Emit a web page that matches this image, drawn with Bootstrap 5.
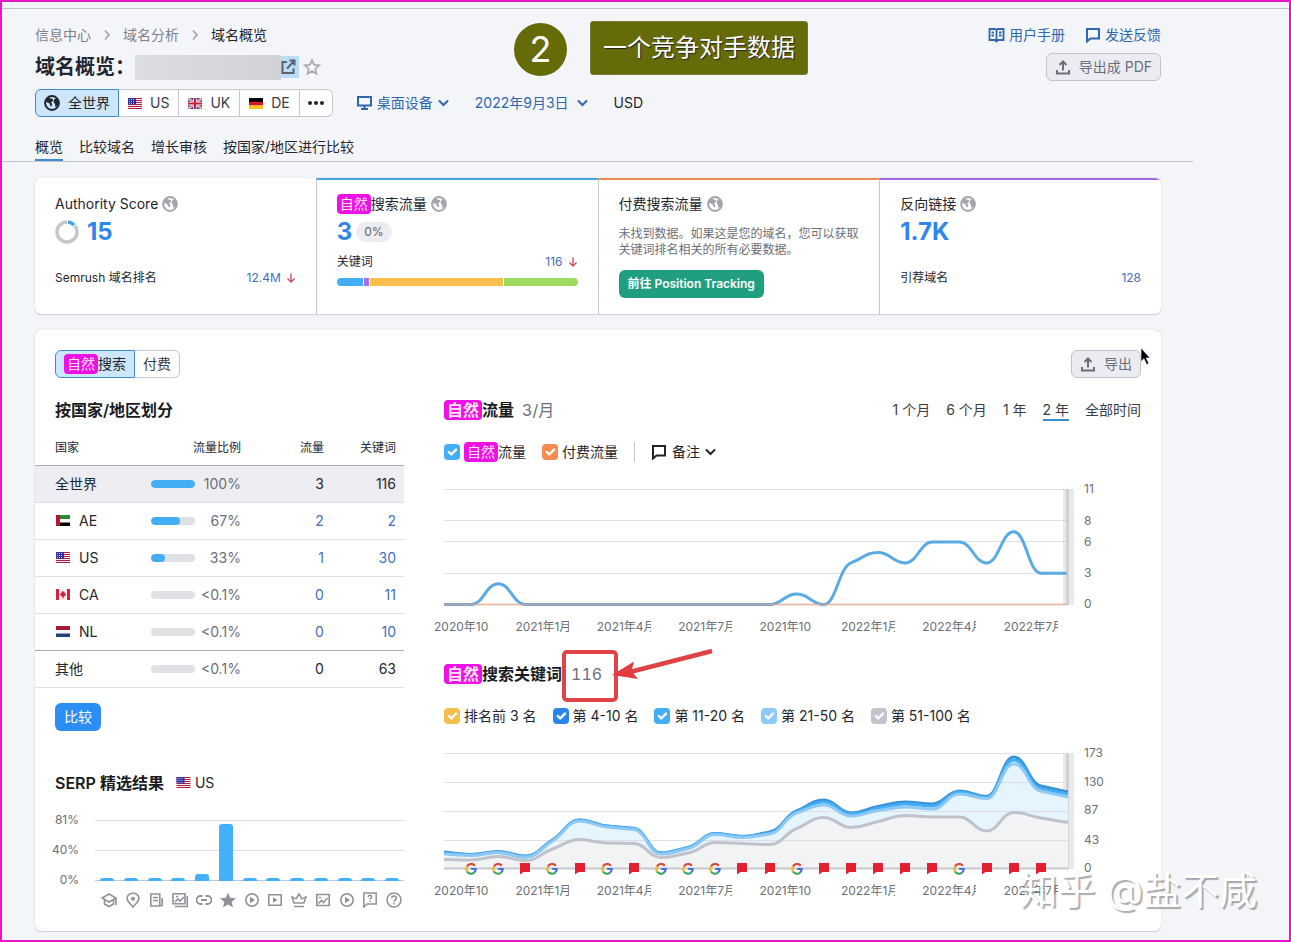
<!DOCTYPE html>
<html lang="zh-CN">
<head>
<meta charset="utf-8">
<meta name="viewport" content="width=device-width, initial-scale=1">
<title>域名概览</title>
<link href="https://cdn.jsdelivr.net/npm/bootstrap@5.3.0/dist/css/bootstrap.min.css" rel="stylesheet">
<style>
  body { font-family: Inter, "Noto Sans CJK SC", sans-serif; font-size: 14px; line-height: 20px; color: #24262f; background: #f4f5f9; }
  .page { min-height: 100vh; border: 2px solid #e516c4; padding-bottom: 8px; }
  .topline { height: 7px; border-bottom: 1px solid #bfc3d3; }
  .inner { padding-left: 33px; padding-right: 128px; }
  a { color: #2f66b0; text-decoration: none; }
  svg { flex: none; }
  .fs12 { font-size: 12px; line-height: 16px; }
  .dim { color: #6c6e79; }
  .blue { color: #3f6fc0; }
  .head { padding-top: 16px; }
  .crumb { gap: 12px; color: #7f818c; }
  .crumb a { color: inherit; }
  .help-links { gap: 20px; }
  .site-title { font-size: 20px; line-height: 28px; font-weight: 700; }
  .masked { width: 146px; height: 25px; background: linear-gradient(90deg, #dcdde1, #d0d2d7); }
  .ext { background: #b9dcf8; padding: 3px 3px 3px 0; color: #5b6275; display: flex; }
  .tool { height: 28px; display: inline-flex; align-items: center; font-size: 14px; line-height: 20px; border-radius: 6px; padding: 0 8px; border: 1px solid transparent; white-space: nowrap; }
  .tool-gray, .tool-gray:hover { background: #ebecf1; border-color: #c0c2cc; color: #6c6e79; gap: 8px; }
  .seg .tool { background: #fff; border-color: #c4c7cf; color: #3a3c46; gap: 8px; }
  .seg .tool.land { padding: 0 9px; }
  .seg .tool.active { background: #cbe6fd; border-color: #3e8bcb; color: #24262f; z-index: 1; }
  .filters { gap: 26px; }
  .drop, .drop:hover { border: 0; background: none; padding: 0; color: #2f66b0; display: inline-flex; align-items: center; gap: 5px; }
  .tabs-line { gap: 16px; padding: 20px 0 0 33px; margin-right: 96px; border-bottom: 1px solid #c0c3cf; }
  .tabs-line a { color: #24262f; padding-bottom: 2px; border-bottom: 2px solid transparent; }
  .tabs-line a.active { border-color: #3a8bd0; }
  .sheet { background: #fff; border-radius: 6px; box-shadow: 0 0 1px #a9abb6, 0 1px 1px #d2d4db; overflow: hidden; }
  .metric { min-height: 136px; padding: 14px 20px 16px; border-top: 2px solid #fff; }
  .metric + .metric { border-left: 1px solid #c4c6ce; }
  .metric.top-blue { border-top-color: #45a7e6; }
  .metric.top-orange { border-top-color: #ee8a55; }
  .metric.top-purple { border-top-color: #a06be0; }
  .value { font-size: 24px; line-height: 28px; font-weight: 700; color: #2f86ea; margin-top: 4px; gap: 8px; }
  .pct { background: #ececf1; border-radius: 10px; padding: 2px 8px; color: #5f616c; font-weight: 400; }
  .trend { display: inline-flex; align-items: center; gap: 5px; }
  .hl { background: #ef10e4; color: #ffe3fd; border-radius: 4px; padding: 0 3px; display: inline-block; }
  .gap-row { margin-top: 24px; }
  .desc { margin: 12px 0; }
  .tool-green, .tool-green:hover { background: #1f9f80; color: #fff; font-size: 12px; font-weight: 600; }
  .tool-blue, .tool-blue:hover { background: #2b8ef5; color: #fff; }
  .shares { height: 8px; gap: 1px; margin-top: 8px; border-radius: 4px; overflow: hidden; }
  .panel-top { padding: 20px 20px 0; }
  .split { display: grid; grid-template-columns: minmax(0, 369fr) minmax(0, 757fr); margin-top: 22px; }
  .indent { padding-left: 20px; }
  .right-col { padding: 0 20px 32px 40px; }
  h2 { font-size: 16px; line-height: 20px; font-weight: 600; margin: 0; color: #191b23; white-space: nowrap; }
  h2 .count { font-weight: 400; color: #6c6e79; font-variant-numeric: tabular-nums; }
  .geo { table-layout: fixed; width: 100%; margin: 12px 0 15px; }
  .geo th { font-size: 12px; font-weight: 400; height: 33px; padding: 0; border-bottom: 1px solid #a9abb6; }
  .geo td { height: 37px; padding: 0; border-bottom: 1px solid #dfe0e5; }
  .geo .sel td { background: #ededf2; }
  .geo .dark td { border-bottom-color: #a9abb6; }
  .geo th:first-child, .geo td:first-child { padding-left: 20px; }
  .geo th:last-child, .geo td:last-child { padding-right: 8px; }
  .geo .progress { width: 44px; height: 8px; border-radius: 4px; background: #dfe1e5; }
  .geo .progress-bar { background: #43aef5; border-radius: 4px; }
  .serp-title { margin-top: 42px; gap: 12px; }
  .serp { margin-top: 19px; padding-left: 20px; gap: 16px; }
  .serp-scale { width: 24px; height: 76px; }
  .serp-plot { height: 61px; margin-top: 8px; background: linear-gradient(#dcdee3, #dcdee3) 0 0/100% 1px no-repeat, linear-gradient(#dcdee3, #dcdee3) 0 30px/100% 1px no-repeat, linear-gradient(#c4c7cf, #c4c7cf) 0 60px/100% 1px no-repeat; }
  .thirteen { display: grid; grid-template-columns: repeat(13, minmax(0, 1fr)); align-items: end; }
  .serp-bar { width: 14px; margin-left: 5px; background: #43b0fc; border-radius: 3px 3px 0 0; }
  .serp-icons { margin-top: 11px; color: #8f9298; }
  .serp-icons svg { margin-left: 6px; }
  .periods { gap: 16px; }
  .periods button { border: 0; background: none; padding: 0; color: #3a3c46; height: 20px; white-space: nowrap; }
  .periods .active { box-shadow: 0 1px 0 #3a8bd0; border-bottom: 1px solid #3a8bd0; }
  .legend { margin-top: 22px; height: 20px; gap: 16px; white-space: nowrap; }
  .legend label { display: inline-flex; align-items: center; gap: 4px; }
  .legend .form-check-input { width: 16px; height: 16px; margin: 0; border: 0; border-radius: 4px; float: none; }
  .c1:checked { background-color: #43aef5; } .c2:checked { background-color: #fb8a50; }
  .c3:checked { background-color: #f5bd4a; } .c4:checked { background-color: #2a86ea; }
  .c5:checked { background-color: #8ecaf9; } .c6:checked { background-color: #c2c3cc; }
  .vr-line { width: 1px; height: 20px; background: #c4c6ce; }
  .chart { margin-top: 27px; }
  .plot { height: 116px; width: 100%; overflow: visible; display: block; }
  .axis { width: 73px; height: 116px; overflow: visible; font-size: 12px; }
  .axis text { fill: #6c6e79; }
  .dates { margin: 14px 56px 0 -10px; color: #6c6e79; }
  .dates span { flex: 1 1 0; }
  .dates i { display: block; width: 54px; overflow: hidden; white-space: nowrap; font-style: normal; }
  .second { margin-top: 29px; }
  .markers { position: absolute; left: 0; right: 0; bottom: -6px; padding: 0 2.17%; display: grid; grid-template-columns: repeat(22, minmax(0, 1fr)); justify-items: center; }
  .boxed { position: relative; margin-left: 9px; }
  .red-frame { position: absolute; left: -9px; top: -14px; width: 56px; height: 52px; border: 4px solid #df4547; border-radius: 5px; }
  .red-arrow { position: absolute; left: 41px; top: -16px; }
  .note-circle { position: absolute; left: 512px; top: 21px; width: 53px; height: 53px; border-radius: 50%; background: #666b0a; color: #fff; font: 36px/53px Inter, sans-serif; text-align: center; }
  .note-box { position: absolute; left: 588px; top: 19px; height: 54px; padding: 0 12px; border-radius: 3px; background: #666b0a; border: 1px solid #77793c; color: #fff; font-size: 24px; line-height: 52px; text-shadow: 1px 1px 1px #222; white-space: nowrap; }
  .pointer { position: absolute; right: -10px; top: -3px; }
  .watermark { position: absolute; right: 32px; bottom: 24px; font-size: 38px; line-height: 52px; color: #fff; text-shadow: 2px 2px 1px rgba(90, 90, 95, .5); white-space: nowrap; }
</style>
</head>
<body>
<svg width="0" height="0" class="position-absolute" aria-hidden="true">
  <symbol id="globe" viewBox="0 0 16 16"><circle cx="8" cy="8" r="6.900" fill="none" stroke="currentColor" stroke-width="2"/><path fill="currentColor" d="M2.500 3.500 5 2l1 1.500 2.500.3.800 1.500L7.800 7l-1 .2 1.400 1.500-.6 2.800-1.300-.8-.5-1.900-2-1.300L2 7zM10 4.500 12.500 3l2 3-.3 4-2 1.800-1.200-.6.2-2.200L9.600 7.500z"/></symbol>
  <symbol id="chev" viewBox="0 0 11 8"><path d="m1.500 2 4 4 4-4" fill="none" stroke="currentColor" stroke-width="2" stroke-linecap="round"/></symbol>
  <symbol id="crumbchev" viewBox="0 0 8 12"><path d="m2 1.500 4 4.500-4 4.500" fill="none" stroke="#9c9ea8" stroke-width="1.600"/></symbol>
  <symbol id="upload" viewBox="0 0 16 16"><path d="M2 11v3.500h12V11M8 11.500V3M4.500 6 8 2.500 11.500 6" fill="none" stroke="currentColor" stroke-width="2"/></symbol>
  <symbol id="speech" viewBox="0 0 16 16"><path d="M2 2h12v9.500H5.500L2 14.500z" fill="none" stroke="currentColor" stroke-width="2"/></symbol>
  <symbol id="down" viewBox="0 0 10 10"><path d="M5 .5v8M1.500 5.500 5 9l3.500-3.500" fill="none" stroke="#c9485b" stroke-width="1.300"/></symbol>
  <symbol id="f-us" viewBox="0 0 14 11"><path fill="#f5e9ee" d="M0 0h14v11H0z"/><path d="M0 .5h14M0 2.500h14M0 4.500h14M0 6.500h14M0 8.500h14M0 10.500h14" stroke="#b0203c"/><path fill="#3230a0" d="M0 0h8v6.500H0z"/><path d="M1 1.500h6M1 3.500h6M1 5.500h6" stroke="#b9b9ea" stroke-dasharray="1 1"/></symbol>
  <symbol id="f-uk" viewBox="0 0 14 11"><path fill="#2b3a86" d="M0 0h14v11H0z"/><path d="m0 0 14 11M14 0 0 11" stroke="#fff" stroke-width="2.200"/><path d="m0 0 14 11M14 0 0 11" stroke="#c8203a" stroke-width=".8"/><path d="M7 0v11M0 5.500h14" stroke="#fff" stroke-width="3.600"/><path d="M7 0v11M0 5.500h14" stroke="#c8203a" stroke-width="2.200"/></symbol>
  <symbol id="f-de" viewBox="0 0 14 11"><path d="M0 0h14v4H0z"/><path fill="#d9151c" d="M0 4h14v3.500H0z"/><path fill="#f7c51e" d="M0 7.500h14V11H0z"/></symbol>
  <symbol id="f-ae" viewBox="0 0 14 11"><path fill="#2d8a35" d="M0 0h14v4H0z"/><path fill="#f4f4f4" d="M0 4h14v3.500H0z"/><path d="M0 7.500h14V11H0z"/><path fill="#b8162c" d="M0 0h4v11H0z"/></symbol>
  <symbol id="f-ca" viewBox="0 0 14 11"><path fill="#f8eef0" d="M0 0h14v11H0z"/><path fill="#d3203c" d="M0 0h3v11H0zM11 0h3v11h-3zM7 1.500l.8 1.600.9-.4-.2 2 1.500-.6-.3 1.200.4.4-2.100 1.900.1.700H7.300V10h-.6V8.300H5.900l.1-.7L3.900 5.700l.4-.4L4 4.100l1.500.6-.2-2 .9.4z"/></symbol>
  <symbol id="f-nl" viewBox="0 0 14 11"><path fill="#a01c34" d="M0 0h14v4H0z"/><path fill="#f6f6f8" d="M0 4h14v3.500H0z"/><path fill="#26407c" d="M0 7.500h14V11H0z"/></symbol>
  <symbol id="goog" viewBox="0 0 12 12"><g fill="none" stroke-width="2.200"><path d="M9.800 2.700A4.700 4.700 0 0 0 2 3.500" stroke="#dd4437"/><path d="M2 3.500a4.700 4.700 0 0 0 0 5" stroke="#f2b51d"/><path d="M2 8.500a4.700 4.700 0 0 0 7.200 1" stroke="#36a455"/><path d="M9.200 9.500A4.700 4.700 0 0 0 10.700 6H6.200" stroke="#4273d8"/></g></symbol>
  <symbol id="flag" viewBox="0 0 12 12"><path fill="#e3202f" d="M1 0h10v9H4.500L1 11.500z"/></symbol>
  <symbol id="play" viewBox="0 0 16 16"><circle cx="8" cy="8" r="6.200" fill="none" stroke="currentColor" stroke-width="1.600"/><path d="M6 4.800 11 8l-5 3.200z" fill="currentColor"/></symbol>
</svg>

<div class="page position-relative">
  <div class="topline"></div>
  <header class="inner head">
    <div class="d-flex justify-content-between">
      <nav class="crumb d-flex align-items-center" aria-label="breadcrumb">
        <a href="#">信息中心</a><svg width="8" height="12"><use href="#crumbchev"/></svg>
        <a href="#">域名分析</a><svg width="8" height="12"><use href="#crumbchev"/></svg>
        <span class="text-dark">域名概览</span>
      </nav>
      <div class="help-links d-flex">
        <a href="#" class="d-flex align-items-center gap-1"><svg width="17" height="16" viewBox="0 0 17 16"><path d="M8.500 3v12M1.500 2H7l1.500 1L10 2h5.500v11H10l-1.500 1.500L7 13H1.500zM3.500 5.500H6M3.500 8.500H6M11 5.500h2.500M11 8.500h2.500" fill="none" stroke="currentColor" stroke-width="1.800"/></svg>用户手册</a>
        <a href="#" class="d-flex align-items-center gap-1"><svg width="16" height="16"><use href="#speech"/></svg>发送反馈</a>
      </div>
    </div>
    <div class="d-flex justify-content-between mt-2">
      <div class="d-flex align-items-center">
        <h1 class="site-title mb-0">域名概览：</h1>
        <div class="masked"></div>
        <a href="#" class="ext" aria-label="打开网站"><svg width="15" height="16" viewBox="0 0 15 16"><path d="M6 3H1.500v11h11V9.500M8.500 1.500h5v5M13.500 1.500 6 9.500" fill="none" stroke="currentColor" stroke-width="2"/></svg></a>
        <svg class="ms-1" width="18" height="18" viewBox="0 0 18 18"><path d="m9 2 2.100 4.800 5.100.5-3.900 3.400 1.200 5.100L9 13.100l-4.500 2.700 1.200-5.100-3.900-3.400 5.100-.5z" fill="none" stroke="#a6a8b2" stroke-width="1.700"/></svg>
      </div>
      <button type="button" class="tool tool-gray"><svg width="16" height="16"><use href="#upload"/></svg>导出成 PDF</button>
    </div>
    <div class="d-flex align-items-center mt-2">
      <div class="btn-group seg" role="group">
        <button type="button" class="tool active rounded-end-0"><svg width="16" height="16"><use href="#globe"/></svg>全世界</button>
        <button type="button" class="tool land rounded-0 border-start-0"><svg width="14" height="11"><use href="#f-us"/></svg>US</button>
        <button type="button" class="tool land rounded-0 border-start-0"><svg width="14" height="11"><use href="#f-uk"/></svg>UK</button>
        <button type="button" class="tool land rounded-0 border-start-0"><svg width="14" height="11"><use href="#f-de"/></svg>DE</button>
        <button type="button" class="tool rounded-start-0 border-start-0" aria-label="更多"><svg width="16" height="6" viewBox="0 0 16 6"><g fill="#24262f"><circle cx="2" cy="3" r="2"/><circle cx="8" cy="3" r="2"/><circle cx="14" cy="3" r="2"/></g></svg></button>
      </div>
      <div class="filters d-flex ms-4">
        <button type="button" class="drop"><svg width="15" height="14" viewBox="0 0 15 14"><path d="M1 1h13v8.500H1zM7.500 9.500V13M4 13h7" fill="none" stroke="currentColor" stroke-width="2"/></svg>桌面设备<svg width="11" height="8"><use href="#chev"/></svg></button>
        <button type="button" class="drop gap-2">2022年9月3日<svg width="11" height="8"><use href="#chev"/></svg></button>
        <span>USD</span>
      </div>
    </div>
  </header>
  <nav class="tabs-line d-flex">
    <a href="#" class="active">概览</a><a href="#">比较域名</a><a href="#">增长审核</a><a href="#">按国家/地区进行比较</a>
  </nav>

  <main class="inner pt-3">
    <section class="sheet row g-0">
      <div class="col metric">
        <div class="d-flex align-items-center gap-1">Authority Score<svg width="16" height="16" color="#a3a5af"><use href="#globe"/></svg></div>
        <div class="value d-flex align-items-center"><svg width="24" height="24" viewBox="0 0 24 24"><circle cx="12" cy="12" r="10" fill="none" stroke="#c5c7cd" stroke-width="3.500"/><path d="M12 2a10 10 0 0 1 8 4" fill="none" stroke="#fff" stroke-width="4"/><path d="M13 2.050a10 10 0 0 1 6.200 3.100" fill="none" stroke="#45a7dd" stroke-width="3.500"/></svg>15</div>
        <div class="gap-row fs12 d-flex justify-content-between align-items-center"><span>Semrush 域名排名</span><a href="#" class="blue trend">12.4M<svg width="10" height="10"><use href="#down"/></svg></a></div>
      </div>
      <div class="col metric top-blue">
        <div class="d-flex align-items-center gap-1"><span><span class="hl">自然</span>搜索流量</span><svg width="16" height="16" color="#a3a5af"><use href="#globe"/></svg></div>
        <div class="value d-flex align-items-center gap-1">3<span class="pct fs12">0%</span></div>
        <div class="mt-2 fs12 d-flex justify-content-between"><span>关键词</span><a href="#" class="blue trend">116<svg width="10" height="10"><use href="#down"/></svg></a></div>
        <div class="shares d-flex"><div style="width:11%;background:#43aef5"></div><div style="width:2%;background:#a373e6"></div><div style="width:56%;background:#f8bf4c"></div><div style="width:31%;background:#9fd964"></div></div>
      </div>
      <div class="col metric top-orange">
        <div class="d-flex align-items-center gap-1">付费搜索流量<svg width="16" height="16" color="#a3a5af"><use href="#globe"/></svg></div>
        <p class="desc fs12 dim">未找到数据。如果这是您的域名，您可以获取关键词排名相关的所有必要数据。</p>
        <button type="button" class="tool tool-green">前往 Position Tracking</button>
      </div>
      <div class="col metric top-purple">
        <div class="d-flex align-items-center gap-1">反向链接<svg width="16" height="16" color="#a3a5af"><use href="#globe"/></svg></div>
        <div class="value">1.7K</div>
        <div class="gap-row fs12 d-flex justify-content-between"><span>引荐域名</span><a href="#" class="blue">128</a></div>
      </div>
    </section>

    <section class="sheet mt-3">
      <div class="panel-top d-flex justify-content-between">
        <div class="btn-group seg" role="group">
          <button type="button" class="tool active rounded-end-0"><span><span class="hl">自然</span>搜索</span></button>
          <button type="button" class="tool rounded-start-0 border-start-0">付费</button>
        </div>
        <div class="position-relative">
          <button type="button" class="tool tool-gray"><svg width="16" height="16"><use href="#upload"/></svg>导出</button>
          <svg class="pointer" width="11" height="19" viewBox="0 0 11 19"><path d="M1 1v13.500l3-2.800 2.600 5.800 2.200-1-2.600-5.600H10z" stroke="#fff" stroke-width=".6"/></svg>
        </div>
      </div>
      <div class="split">
        <div>
          <h2 class="indent">按国家/地区划分</h2>
          <table class="geo">
            <colgroup><col style="width:31.4%"><col style="width:24.4%"><col style="width:22.5%"><col style="width:21.7%"></colgroup>
            <thead><tr><th>国家</th><th class="text-end">流量比例</th><th class="text-end">流量</th><th class="text-end">关键词</th></tr></thead>
            <tbody id="geoRows"></tbody>
          </table>
          <div class="indent d-flex"><button type="button" class="tool tool-blue">比较</button></div>
          <div class="serp-title indent d-flex align-items-center"><h2>SERP 精选结果</h2><span class="d-flex align-items-center gap-1"><svg width="15" height="11"><use href="#f-us"/></svg>US</span></div>
          <div class="serp d-flex">
            <div class="serp-scale fs12 dim d-flex flex-column justify-content-between align-items-end"><span>81%</span><span>40%</span><span>0%</span></div>
            <div class="flex-grow-1">
              <div class="serp-plot thirteen" id="serpBars"></div>
              <div class="serp-icons thirteen">
                <svg width="16" height="16" viewBox="0 0 16 16" fill="none" stroke="currentColor" stroke-width="1.600"><path d="m8 2 7 4-7 4-7-4zM3.500 8v4L8 14.500l4.500-2.500V8M15 6v7"/></svg>
                <svg width="16" height="16" viewBox="0 0 16 16" fill="none" stroke="currentColor" stroke-width="1.600"><path d="M8 15 4 10.500C0 6 3 1.300 8 1.300S16 6 12 10.500z"/><circle cx="8" cy="6.800" r="1.200"/></svg>
                <svg width="16" height="16" viewBox="0 0 16 16" fill="none" stroke="currentColor" stroke-width="1.600"><path d="M1.800 2h9v12h-9zM4 5.500h5M4 8.500h5M13.200 6v7.500H10"/></svg>
                <svg width="16" height="16" viewBox="0 0 16 16" fill="none" stroke="currentColor" stroke-width="1.600"><path d="M1 1.800h12v10H1zM3 10l3-3 2 2 4-4M15.300 4v10.500H3M4 4.500h2"/></svg>
                <svg width="16" height="16" viewBox="0 0 16 16" fill="none" stroke="currentColor" stroke-width="1.800"><path d="M6.500 4H4.500a3.800 3.800 0 0 0 0 8h2M9.500 4h2a3.800 3.800 0 0 1 0 8h-2M5 8h6"/></svg>
                <svg width="16" height="16" viewBox="0 0 16 16"><path fill="currentColor" d="m8 .5 2.200 5.300 5.800.4-4.400 3.700L13 15.500l-5-3-5 3 1.400-5.600L0 6.200l5.800-.4z"/></svg>
                <svg width="16" height="16"><use href="#play"/></svg>
                <svg width="16" height="16" viewBox="0 0 16 16"><path d="M1.800 2.800h12.400v10.400H1.800z" fill="none" stroke="currentColor" stroke-width="1.600"/><path d="M6 5.200 10.500 8 6 10.800z" fill="currentColor"/></svg>
                <svg width="16" height="16" viewBox="0 0 16 16" fill="none" stroke="currentColor" stroke-width="1.500"><path d="M3 11 1 4.800l4 2L8 2l3 4.800 4-2L13 11zM3 14.500h10"/></svg>
                <svg width="16" height="16" viewBox="0 0 16 16" fill="none" stroke="currentColor" stroke-width="1.600"><path d="M1.800 2.500h12.400v11H1.800zM3.500 11.500l3-3 2 2 4-4.500M4 5.500h2"/></svg>
                <svg width="16" height="16"><use href="#play"/></svg>
                <svg width="16" height="16" viewBox="0 0 16 16" fill="none" stroke="currentColor" stroke-width="1.500"><path d="M1.800 1h12.400v11H5l-3.200 3zM6.300 5c0-2.200 3.400-2.200 3.400 0 0 1.200-1.700 1-1.700 2.500M8 8.800v1.200"/></svg>
                <svg width="16" height="16" viewBox="0 0 16 16" fill="none" stroke="currentColor" stroke-width="1.600"><circle cx="8" cy="8" r="7"/><path d="M5.700 6.300c0-3 4.600-3 4.600 0C10.300 8 8 7.700 8 9.800M8 11v1.600"/></svg>
              </div>
            </div>
          </div>
        </div>

        <div class="right-col">
          <div class="d-flex justify-content-between">
            <h2><span class="hl">自然</span>流量 <span class="count ms-1">3/月</span></h2>
            <div class="periods d-flex"><button type="button">1 个月</button><button type="button">6 个月</button><button type="button">1 年</button><button type="button" class="active">2 年</button><button type="button">全部时间</button></div>
          </div>
          <div class="legend d-flex align-items-center">
            <label><input class="form-check-input c1" type="checkbox" checked><span><span class="hl">自然</span>流量</span></label>
            <label><input class="form-check-input c2" type="checkbox" checked>付费流量</label>
            <span class="vr-line"></span>
            <button type="button" class="drop text-dark"><svg width="16" height="16"><use href="#speech"/></svg>备注<svg width="11" height="8"><use href="#chev"/></svg></button>
          </div>
          <div class="chart d-flex">
            <div class="flex-grow-1">
              <svg class="plot" viewBox="0 0 624 116" preserveAspectRatio="none">
                <path d="M0 .5h624M0 31.500h624M0 52.500h624M0 84.500h624M0 115.500h624" stroke="#e0e1e6"/>
                <path id="traffic" fill="none" stroke="#5aabe3" stroke-width="3"/>
                <path d="M0 115.500h624" stroke="#f0a184" stroke-width="2" opacity=".6"/>
              </svg>
            </div>
            <svg class="axis"><rect x="-5" width="11" height="116" fill="#8f939b" opacity=".2"/><path d="M-.5 0v116" stroke="#c3c6cb" stroke-width="2"/><text x="16" y="4">11</text><text x="16" y="36">8</text><text x="16" y="57">6</text><text x="16" y="88">3</text><text x="16" y="119">0</text></svg>
          </div>
          <div class="dates d-flex fs12"><span><i>2020年10</i></span><span><i>2021年1月</i></span><span><i>2021年4月</i></span><span><i>2021年7月</i></span><span><i>2021年10</i></span><span><i>2022年1月</i></span><span><i>2022年4月</i></span><span><i>2022年7月</i></span></div>

          <h2 class="second"><span class="hl">自然</span>搜索关键词<span class="count boxed">116<span class="red-frame"></span><svg class="red-arrow" width="104" height="34" viewBox="0 0 104 34"><path d="M100 3 18 24" stroke="#dd4346" stroke-width="4.500"/><path d="M0 27 22 13.500 19.500 23 26 31z" fill="#e23c3e"/></svg></span></h2>
          <div class="legend d-flex align-items-center">
            <label><input class="form-check-input c3" type="checkbox" checked>排名前 3 名</label>
            <label><input class="form-check-input c4" type="checkbox" checked>第 4-10 名</label>
            <label><input class="form-check-input c1" type="checkbox" checked>第 11-20 名</label>
            <label><input class="form-check-input c5" type="checkbox" checked>第 21-50 名</label>
            <label><input class="form-check-input c6" type="checkbox" checked>第 51-100 名</label>
          </div>
          <div class="chart d-flex">
            <div class="flex-grow-1 position-relative">
              <svg class="plot" viewBox="0 0 624 116" preserveAspectRatio="none">
                <path id="blueArea" fill="#e6f4fe"/><path id="grayArea" fill="#f2f3f5"/>
                <path d="M0 .5h624M0 29.500h624M0 58.500h624M0 87.500h624" stroke="#d9dbe0" opacity=".8"/>
                <path d="M0 115.500h624" stroke="#c6c8ce" stroke-width="2"/>
                <path id="grayLine" fill="none" stroke="#c0c2cb" stroke-width="3"/>
                <path id="topLine" fill="none" stroke="#3a92d8" stroke-width="3"/>
                <path id="midLine" fill="none" stroke="#43aef5" stroke-width="3"/>
                <path id="lightLine" fill="none" stroke="#8ec8f4" stroke-width="3"/>
              </svg>
              <div class="markers" id="markers"></div>
            </div>
            <svg class="axis"><rect x="-5" width="11" height="116" fill="#8f939b" opacity=".2"/><path d="M-.5 0v116" stroke="#c3c6cb" stroke-width="2"/><text x="16" y="4">173</text><text x="16" y="33">130</text><text x="16" y="61">87</text><text x="16" y="91">43</text><text x="16" y="119">0</text></svg>
          </div>
          <div class="dates d-flex fs12"><span><i>2020年10</i></span><span><i>2021年1月</i></span><span><i>2021年4月</i></span><span><i>2021年7月</i></span><span><i>2021年10</i></span><span><i>2022年1月</i></span><span><i>2022年4月</i></span><span><i>2022年7月</i></span></div>
        </div>
      </div>
    </section>
  </main>

  <div class="note-circle">2</div>
  <div class="note-box">一个竞争对手数据</div>
  <div class="watermark">知乎 @盐不咸</div>
</div>

<script src="https://cdn.jsdelivr.net/npm/bootstrap@5.3.0/dist/js/bootstrap.bundle.min.js"></script>
<script>
  // Country table: name, flag, bar share, label, traffic, keywords, row class
  const geo = [
    ['全世界', '', 100, '100%', '3', '116', 'sel'],
    ['AE', 'ae', 67, '67%', '2', '2', ''],
    ['US', 'us', 33, '33%', '1', '30', ''],
    ['CA', 'ca', 0, '&lt;0.1%', '0', '11', ''],
    ['NL', 'nl', 0, '&lt;0.1%', '0', '10', 'dark'],
    ['其他', '', 0, '&lt;0.1%', '0', '63', '']
  ];
  document.getElementById('geoRows').innerHTML = geo.map(([name, flag, share, label, traffic, keys, cls]) => {
    const num = v => flag ? `<a href="#" class="blue">${v}</a>` : v;
    const icon = flag ? `<svg width="16" height="11"><use href="#f-${flag}"/></svg>` : '';
    return `<tr class="${cls}"><td><span class="d-flex align-items-center gap-2">${icon}${name}</span></td>
      <td><div class="d-flex align-items-center justify-content-between"><div class="progress"><div class="progress-bar" style="width:${share}%"></div></div><span class="dim">${label}</span></div></td>
      <td class="text-end">${num(traffic)}</td><td class="text-end">${num(keys)}</td></tr>`;
  }).join('');

  document.getElementById('serpBars').innerHTML = [2, 2, 2, 2, 6, 56, 2, 2, 2, 2, 2, 2, 2]
    .map(h => `<div class="serp-bar" style="height:${h + 1}px"></div>`).join('');

  document.getElementById('markers').innerHTML = [...'GGFGFGFGGGFFGFFFFFGFFF']
    .map(m => `<svg width="12" height="12"><use href="#${m === 'G' ? 'goog' : 'flag'}"/></svg>`).join('');

  // Smooth curve through evenly spaced points, never overshooting them
  function curve(ys) {
    const n = ys.length, dx = 624 / (n - 1), h = dx * 0.45;
    const d = ys.slice(1).map((y, i) => (y - ys[i]) / dx);
    const m = ys.map((_, i) => {
      if (i === 0) return d[0];
      if (i === n - 1) return d[n - 2];
      const a = d[i - 1], b = d[i];
      return a * b <= 0 ? 0 : Math.sign(a) * Math.min(Math.abs(a), Math.abs(b));
    });
    let p = `M0 ${ys[0]}`;
    for (let i = 0; i < n - 1; i++) {
      const x = i * dx;
      p += `C${x + h} ${ys[i] + m[i] * h} ${x + dx - h} ${ys[i + 1] - m[i + 1] * h} ${x + dx} ${ys[i + 1]}`;
    }
    return p;
  }
  const draw = (id, d) => document.getElementById(id).setAttribute('d', d);
  draw('traffic', curve([0,0,2,0,0,0,0,0,0,0,0,0,0,1,0,4,5,4,6,6,4,7,3,3].map(v => 115.5 - v * 10.4)));

  const total = [99,101.5,98.5,103,87,67,73,75.5,100,94.5,80.5,83.5,79,58,47,60,53.5,49,51,38,43.5,4,33,39];
  const low = [106.5,107,103.5,107.5,96,86.5,90,90.5,104.5,100,89.5,90.5,91.5,75.5,64.5,74.5,68.5,62.5,64,64,78,59.5,65,69.5];
  const gapMid = [1,0,1,1,0,0,0,0,0,0,0,0,1,1,2,1,2,2,2,1,1,3,3,2];
  const gapLight = [2,1,1,1,1,1,1,1,1,1,1,1,2,2,5,3,4,5,5,3,2,7,5,5];
  draw('blueArea', curve(total) + 'V115.5H0Z');
  draw('grayArea', curve(low) + 'V115.5H0Z');
  draw('grayLine', curve(low));
  draw('lightLine', curve(total.map((y, i) => y + gapLight[i])));
  draw('midLine', curve(total.map((y, i) => y + gapMid[i])));
  draw('topLine', curve(total));
</script>
</body>
</html>
